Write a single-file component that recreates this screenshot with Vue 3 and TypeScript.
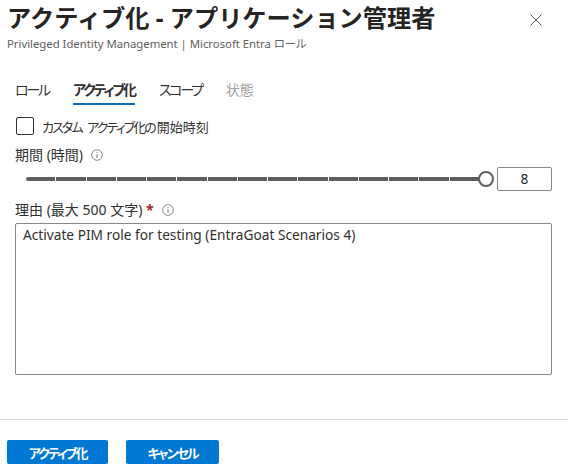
<script setup lang="ts">
const tabs = [
  { label: 'ロール', state: '' },
  { label: 'アクティブ化', state: 'active' },
  { label: 'スコープ', state: '' },
  { label: '状態', state: 'disabled' },
];
const segments: number[] = Array.from({ length: 15 }, (_, i) => i);
</script>

<template>
  <div class="panel">
    <header class="head">
      <div class="titles">
        <h1 class="title">アクティブ化 - アプリケーション管理者</h1>
        <p class="sub">Privileged Identity Management | Microsoft Entra ロール</p>
      </div>
      <svg class="close" width="12" height="12" viewBox="0 0 12 12"><path d="M0.5 0.5L11.5 11.5M11.5 0.5L0.5 11.5" stroke="#555" stroke-width="1" fill="none" /></svg>
    </header>

    <nav class="tabs">
      <span v-for="t in tabs" :key="t.label" class="tab" :class="t.state">{{ t.label }}</span>
    </nav>

    <label class="check">
      <span class="box"></span>
      <span><span class="kana">カスタム アクティブ化</span>の開始時刻</span>
    </label>

    <div class="field-label dur">
      <span>期間 (時間)</span>
      <svg class="info" width="12" height="12" viewBox="0 0 12 12"><circle cx="6" cy="6" r="5.3" fill="none" stroke="#666" stroke-width="0.8" /><path d="M6 5.2V9M6 3v1" stroke="#666" stroke-width="0.9" /></svg>
    </div>

    <div class="slider-row">
      <div class="slider">
        <div class="track">
          <span v-for="s in segments" :key="s" class="seg"></span>
        </div>
        <span class="thumb"></span>
      </div>
      <div class="num">8</div>
    </div>

    <div class="field-label reason">
      <span>理由 (最大 500 文字)<b class="req"> *</b></span>
      <svg class="info" width="12" height="12" viewBox="0 0 12 12"><circle cx="6" cy="6" r="5.3" fill="none" stroke="#666" stroke-width="0.8" /><path d="M6 5.2V9M6 3v1" stroke="#666" stroke-width="0.9" /></svg>
    </div>

    <div class="area">Activate PIM role for testing (EntraGoat Scenarios 4)</div>

    <footer class="foot">
      <button class="btn first">アクティブ化</button>
      <button class="btn second">キャンセル</button>
    </footer>
  </div>
</template>

<style>
html, body { margin: 0; background: #fff; }
</style>

<style scoped>
.panel {
  width: 568px;
  height: 473px;
  box-sizing: border-box;
  overflow: hidden;
  background: #fff;
  color: #323130;
  font-family: "Noto Sans", "Noto Sans CJK JP", sans-serif;
  font-feature-settings: "palt";
  font-size: 13px;
  display: flex;
  flex-direction: column;
}
.head {
  display: flex;
  justify-content: space-between;
  align-items: flex-start;
  padding: 0 26px 0 7px;
}
.title {
  margin: 0;
  font-size: 24.2px;
  line-height: 36px;
  font-weight: 700;
  font-feature-settings: normal;
  color: #252423;
}
.sub {
  margin: 0;
  font-size: 11.3px;
  line-height: 16px;
  color: #605e5c;
}
.close { margin-top: 14px; }
.tabs {
  display: flex;
  gap: 24px;
  margin: 25px 0 0 15px;
  height: 30px;
}
.tab {
  font-size: 14px;
  line-height: 26px;
  height: 28px;
  box-sizing: border-box;
  letter-spacing: -2.2px;
}
.tab.active {
  font-weight: 700;
  border-bottom: 2px solid #0f6cbd;
}
.tab.disabled {
  color: #a19f9d;
  letter-spacing: 0;
}
.check {
  display: flex;
  align-items: center;
  gap: 8px;
  margin: 10px 0 0 16px;
  font-size: 13px;
  height: 18px;
}
.kana {
  letter-spacing: -1.9px;
  word-spacing: 4px;
}
.box {
  width: 18px;
  height: 18px;
  box-sizing: border-box;
  border: 1px solid #323130;
  border-radius: 2px;
}
.field-label {
  display: flex;
  align-items: center;
  gap: 8px;
  margin-left: 15px;
  font-size: 14px;
  line-height: 18px;
}
.dur { margin-top: 11px; }
.reason { margin-top: 10px; }
.req { color: #a4262c; font-weight: 700; }
.slider-row {
  display: flex;
  align-items: center;
  margin: 3px 16px 0 26px;
  height: 24px;
}
.slider {
  flex: 1;
  display: flex;
  align-items: center;
}
.track {
  flex: 1;
  display: flex;
  gap: 1px;
  height: 4px;
  margin-right: -1px;
}
.seg {
  flex: 1;
  background: #605e5c;
}
.seg:first-child { border-radius: 2px 0 0 2px; }
.thumb {
  width: 16px;
  height: 16px;
  box-sizing: border-box;
  border: 2px solid #605e5c;
  border-radius: 50%;
  background: #fff;
}
.num {
  width: 55px;
  height: 24px;
  margin-left: 3px;
  box-sizing: border-box;
  border: 1px solid #8a8886;
  border-radius: 2px;
  text-align: center;
  font-size: 13.7px;
  line-height: 22px;
  color: #252423;
}
.area {
  margin: 4px 16px 0 15px;
  height: 152px;
  box-sizing: border-box;
  border: 1px solid #8a8886;
  border-radius: 2px;
  padding: 2px 7px;
  font-size: 13.7px;
  line-height: 18px;
  color: #323130;
}
.foot {
  margin-top: 44px;
  border-top: 1px solid #e1dfdd;
  padding: 20px 0 0 7px;
  display: flex;
  gap: 18px;
}
.btn {
  height: 24px;
  border: 0;
  border-radius: 2px;
  padding: 0;
  background: #0078d4;
  color: #fff;
  font-family: inherit;
  font-feature-settings: "palt";
  font-size: 13px;
  font-weight: 700;
  letter-spacing: -2px;
}
.first { width: 101px; }
.second { width: 93px; }
</style>
